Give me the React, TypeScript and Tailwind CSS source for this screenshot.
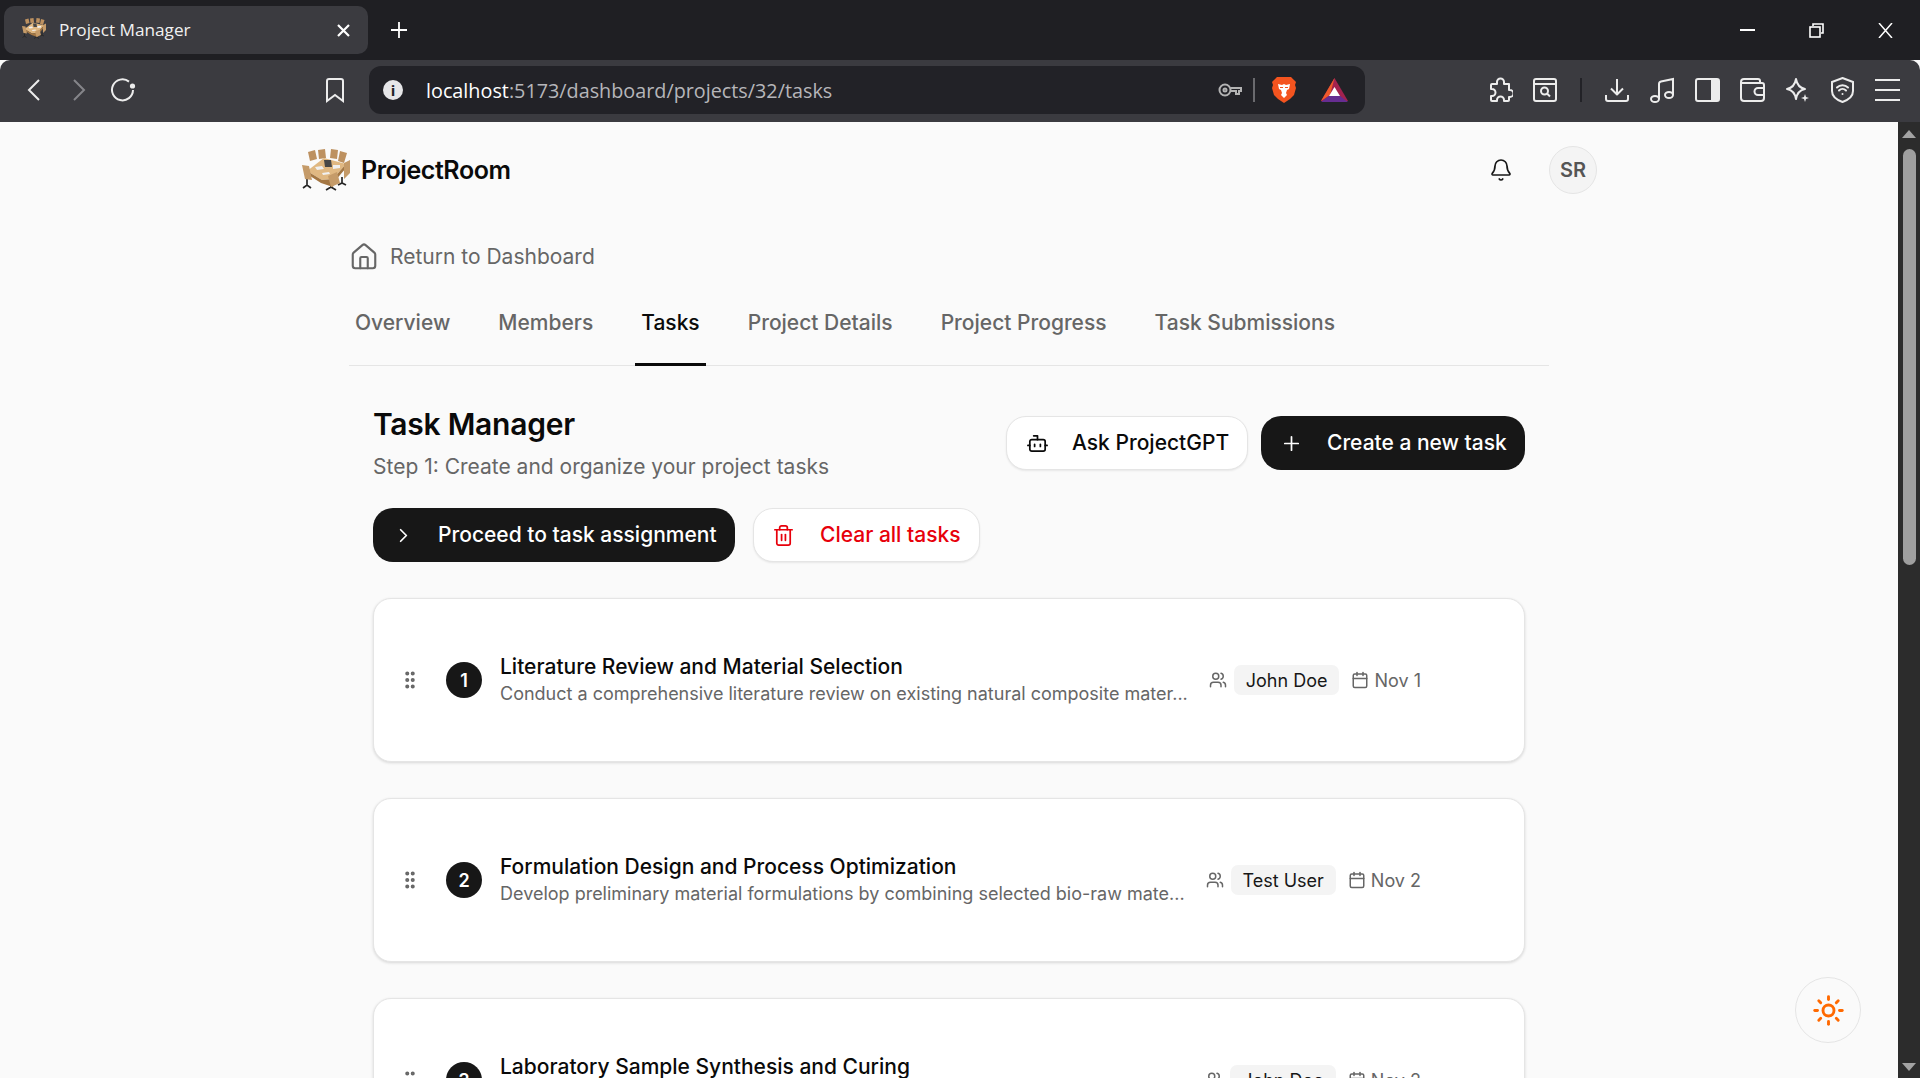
import { Bell, Bot, Calendar, ChevronRight, GripVertical, House, Plus, Sun, Trash2, Users } from "lucide-react";

const tasks = [
	{ n: 1, title: "Literature Review and Material Selection", desc: "Conduct a comprehensive literature review on existing natural composite mater...", who: "John Doe", date: "Nov 1" },
	{ n: 2, title: "Formulation Design and Process Optimization", desc: "Develop preliminary material formulations by combining selected bio-raw mate...", who: "Test User", date: "Nov 2" },
	{ n: 3, title: "Laboratory Sample Synthesis and Curing", desc: "Prepare laboratory samples based on the optimized formulations...", who: "John Doe", date: "Nov 2" },
];

const tabs = ["Overview", "Members", "Tasks", "Project Details", "Project Progress", "Task Submissions"];

// drawn stand-in for the conference table picture
const RoomLogo = ({ className }: { className: string }) => (
	<svg viewBox="0 0 48 42" className={className}>
		<path d="M5 30v7M1 39l4-3 4 3M40 28v7M36 36l4-2 4 2M29 34v4M24 41l5-3 5 3" stroke="#262626" strokeWidth="1.7" fill="none" />
		<path d="M6 3l7-2 2 9-7 2zM16 1l7-1 1 9-7 1zM29 0l7 1-1 9-7-1zM38 2l7 2-3 10-6-2z" fill="#bd9160" />
		<path d="M5 22L22 9l22 6-13 15-11 1z" fill="#e0b882" />
		<path d="M5 22l15 9 11-1 13-15v4L32 33l-1 5-12-4-14-9z" fill="#a47743" />
		<path d="M0 16l7 1 3 14-7-1zM42 14l6-3v13l-6 6zM26 27l9-4 3 11-9 4z" fill="#c59b69" />
		<path d="M22 11l7 0 1 7-7 0z" fill="#474747" />
		<path d="M13 18l7-1 2 3-7 1zM31 16l7 0 0 3-7 1zM20 24l7-1 1 2-7 1z" fill="#f0f0f0" />
	</svg>
);

const BraveLion = () => (
	<svg viewBox="0 0 24 26" className="w-[24px] h-[26px]">
		<path d="M5 0h14l3 3 2 2-1 3 1 3-2 7-4 4-6 4-6-4-4-4-2-7 1-3-1-3 2-2z" fill="#f4541f" />
		<path d="M6 7l4 1 2-1 2 1 4-1-1 5-2 1-1 3 1 2-3 3-3-3 1-2-1-3-2-1z" fill="#fff" />
		<path d="M8 10h3v1H8zM13 10h3v1h-3z" fill="#f4541f" />
	</svg>
);

const BatTriangle = () => (
	<svg viewBox="0 0 27 24" className="w-[27px] h-[24px]">
		<path d="M13.5 0L0 23h27z" fill="#a3224f" />
		<path d="M13.5 0L0 23l9-6z" fill="#ef5a2b" />
		<path d="M0 24l9-7h9l9 7z" fill="#662d91" />
		<path d="M13.5 9L8 18h11z" fill="#fff" />
	</svg>
);

const TaskCard = ({ n, title, desc, who, date }: (typeof tasks)[number]) => (
	<div className="h-[164px] shrink-0 rounded-[18px] border border-[#e5e5e5] bg-white shadow-[0_1px_3px_rgba(0,0,0,0.14)] flex items-center pl-[25px] pr-[103px]">
		<GripVertical className="w-[22px] h-[22px] text-[#666] mr-[25px] shrink-0" strokeWidth={2.4} />
		<div className="w-[36px] h-[36px] rounded-full bg-[#171717] text-white text-[18px] font-semibold flex items-center justify-center mr-[18px] shrink-0">{n}</div>
		<div className="flex-1 min-w-0">
			<div className="text-[21px] leading-[28px] font-medium text-[#0a0a0a] whitespace-nowrap">{title}</div>
			<div className="text-[18px] leading-[26px] text-[#666] whitespace-nowrap">{desc}</div>
		</div>
		<div className="flex items-center ml-[16px] shrink-0">
			<Users className="w-[18px] h-[18px] text-[#666] mr-[7px]" />
			<span className="h-[30px] px-[12px] rounded-[7px] bg-[#f4f4f4] text-[#171717] text-[18px] flex items-center">{who}</span>
			<Calendar className="w-[18px] h-[18px] text-[#666] ml-[12px] mr-[5px]" />
			<span className="text-[18px] text-[#666]">{date}</span>
		</div>
	</div>
);

const App = () => {
	return (
		<div className="w-[1920px] h-[1078px] flex flex-col overflow-hidden relative bg-[#fafafa] font-['Inter',sans-serif]">
			{/* browser tab strip */}
			<div className="h-[60px] shrink-0 bg-[#1f1f23] flex items-center pl-[4px] pr-[27px] text-white font-['Open_Sans',sans-serif]">
				<div className="w-[364px] h-[48px] rounded-[10px] bg-[#3b3b40] flex items-center pl-[18px] pr-[18px]">
					<RoomLogo className="w-[24px] h-[21px] mr-[13px] -mt-[3px]" />
					<span className="text-[17.2px] flex-1 text-[#f1f1f1] -mt-[1px]">Project Manager</span>
					<svg viewBox="0 0 13 13" className="w-[13px] h-[13px]" stroke="currentColor" strokeWidth="2.2"><path d="M1 1l11 11M12 1L1 12" /></svg>
				</div>
				<svg viewBox="0 0 16 16" className="w-[16px] h-[16px] ml-[23px]" stroke="currentColor" strokeWidth="1.8"><path d="M8 0v16M0 8h16" /></svg>
				<div className="flex-1" />
				<div className="w-[15px] h-[2px] bg-white" />
				<svg viewBox="0 0 15 15" className="w-[15px] h-[15px] ml-[54px]" fill="none" stroke="currentColor" strokeWidth="1.6"><path d="M4 3V1h10v9h-2" /><rect x="1" y="4" width="10" height="10" /></svg>
				<svg viewBox="0 0 15 15" className="w-[15px] h-[15px] ml-[54px]" stroke="currentColor" strokeWidth="1.5"><path d="M1 0l13 15M14 0L1 15" /></svg>
			</div>

			{/* browser toolbar */}
			<div className="h-[62px] shrink-0 bg-[#3b3b40] rounded-t-[10px] flex items-center text-[#ececec] pl-[27px] pb-[2px]">
				<svg viewBox="0 0 14 22" className="w-[14px] h-[22px]" fill="none" stroke="currentColor" strokeWidth="2"><path d="M12 1L2 11l10 10" /></svg>
				<svg viewBox="0 0 14 22" className="w-[14px] h-[22px] ml-[31px] text-[#85858a]" fill="none" stroke="currentColor" strokeWidth="2"><path d="M2 1l10 10L2 21" /></svg>
				<svg viewBox="0 0 26 24" className="w-[26px] h-[24px] ml-[24px]" fill="none" stroke="currentColor" strokeWidth="2">
					<path d="M19 3.6A10.5 10.5 0 1 0 23 12" />
					<circle cx="22.5" cy="8" r="2.6" fill="currentColor" stroke="none" />
				</svg>
				<svg viewBox="0 0 18 25" className="w-[18px] h-[25px] ml-[190px]" fill="none" stroke="currentColor" strokeWidth="2"><path d="M3 1h12a2 2 0 0 1 2 2v20l-8-6-8 6V3a2 2 0 0 1 2-2z" /></svg>
				<div className="w-[996px] h-[48px] ml-[25px] rounded-[12px] bg-[#222227] flex items-center pl-[14px] font-['Open_Sans',sans-serif]">
					<span className="w-[20px] h-[20px] rounded-full bg-[#e6e6e8] text-[#222227] text-[15px] font-bold flex items-center justify-center">i</span>
					<span className="ml-[23px] text-[19.8px] flex-1 pt-[1px]">
						<span className="text-white">localhost</span>
						<span className="text-[#b6b6ba]">:5173/dashboard/projects/32/tasks</span>
					</span>
					<svg viewBox="0 0 24 14" className="w-[24px] h-[14px] text-[#b3b3b3]" fill="none" stroke="currentColor" strokeWidth="2">
						<circle cx="7" cy="7" r="5.5" />
						<circle cx="7" cy="7" r="1.5" />
						<path d="M12.5 5H23v3h-2v3h-3V8h-5.500" />
					</svg>
					<div className="w-[2px] h-[24px] bg-[#6a6a6e] ml-[11px]" />
					<div className="ml-[17px]"><BraveLion /></div>
					<div className="ml-[25px] mr-[17px]"><BatTriangle /></div>
				</div>
				<svg viewBox="0 0 26 26" className="w-[26px] h-[26px] ml-[122px]" fill="none" stroke="currentColor" strokeWidth="2" strokeLinejoin="round">
					<path d="M10 7V5a3.500 3.500 0 0 1 7 0v2h5v6h1a3.500 3.500 0 0 1 0 7h-1v3a1 1 0 0 1-1 1h-4v-1a3.500 3.500 0 0 0-7 0v1H5a1 1 0 0 1-1-1v-4h1a3.500 3.500 0 0 0 0-7H4V8a1 1 0 0 1 1-1z" />
				</svg>
				<svg viewBox="0 0 24 24" className="w-[24px] h-[24px] ml-[20px]" fill="none" stroke="currentColor" strokeWidth="2">
					<rect x="1" y="1" width="22" height="22" rx="2" />
					<path d="M1 6h22" />
					<circle cx="11.500" cy="13" r="3.500" />
					<path d="M14 15.500l3 3" />
				</svg>
				<div className="w-[2px] h-[24px] bg-[#222227] ml-[23px]" />
				<svg viewBox="0 0 24 24" className="w-[24px] h-[24px] ml-[23px]" fill="none" stroke="currentColor" strokeWidth="2" strokeLinejoin="round">
					<path d="M12 1v15M6 10.500l6 6 6-6M1 17v4a2 2 0 0 0 2 2h18a2 2 0 0 0 2-2v-4" />
				</svg>
				<svg viewBox="0 0 26 26" className="w-[26px] h-[26px] ml-[20px]" fill="none" stroke="currentColor" strokeWidth="2">
					<ellipse cx="6" cy="22" rx="4" ry="3" />
					<ellipse cx="20" cy="18" rx="4" ry="3" />
					<path d="M10 22V7q0-2 2-2.500L24 2v16" />
				</svg>
				<div className="w-[25px] h-[24px] ml-[20px] rounded-[3px] border-2 border-[#ececec] flex justify-end">
					<div className="w-[7px] h-full bg-[#ececec]" />
				</div>
				<svg viewBox="0 0 25 24" className="w-[25px] h-[24px] ml-[20px]" fill="none" stroke="currentColor" strokeWidth="2">
					<path d="M20 5V3a2 2 0 0 0-2-2H4a3 3 0 0 0-3 3v16a3 3 0 0 0 3 3h17a3 3 0 0 0 3-3V7a2 2 0 0 0-2-2H1" />
					<path d="M24 10h-6a2.500 2.500 0 0 0 0 7h6" />
				</svg>
				<svg viewBox="0 0 25 26" className="w-[25px] h-[26px] ml-[20px]" fill="none" stroke="currentColor" strokeWidth="2" strokeLinejoin="round">
					<path d="M11 2c1 6 4 9 9 10-5 1-8 4-9 10-1-6-4-9-9-10 5-1 8-4 9-10z" />
					<path d="M20 17l1 3 3 1-3 1-1 3-1-3-3-1 3-1z" fill="currentColor" stroke="none" />
				</svg>
				<svg viewBox="0 0 23 26" className="w-[23px] h-[26px] ml-[21px]" fill="none" stroke="currentColor" strokeWidth="2" strokeLinecap="round">
					<path d="M11.500 1L22 5v9c0 5-5 9-10.500 11C6 23 1 19 1 14V5z" />
					<path d="M6 10.500c3-3 8-3 11 0M8 13.500c2-2 5-2 7 0" />
					<circle cx="11.500" cy="17" r="1" fill="currentColor" stroke="none" />
				</svg>
				<div className="w-[25px] ml-[21px] flex flex-col gap-[8px]">
					<div className="h-[2px] bg-[#ececec]" />
					<div className="h-[2px] bg-[#ececec]" />
					<div className="h-[2px] bg-[#ececec]" />
				</div>
			</div>

			<div className="flex-1 min-h-0 flex">
				<div className="flex-1 min-w-0 overflow-hidden">
					<div className="w-[1297px] ml-[300px]">
						{/* top bar */}
						<div className="h-[48px] mt-[24px] flex items-center">
							<RoomLogo className="w-[48px] h-[42px] ml-[2px]" />
							<span className="ml-[11px] pt-[1px] text-[25px] font-semibold tracking-[-0.45px] text-[#0a0a0a]">ProjectRoom</span>
							<div className="flex-1" />
							<Bell className="w-[24px] h-[24px] text-[#171717] mr-[36px]" strokeWidth={1.7} />
							<div className="w-[48px] h-[48px] rounded-full bg-[#f4f4f4] border border-[#e5e5e5] text-[#555] text-[20px] font-semibold flex items-center justify-center">SR</div>
						</div>

						<div className="ml-[49px] w-[1200px]">
							<div className="flex items-center h-[28px] mt-[49px] text-[#666]">
								<House className="w-[30px] h-[30px]" strokeWidth={1.7} />
								<span className="ml-[11px] text-[21px]">Return to Dashboard</span>
							</div>

							{/* tabs */}
							<div className="flex gap-[36px] border-b border-[#e5e5e5] h-[72px] mt-[23px]">
								{tabs.map((t) => (
									<div key={t} className={`text-[21px] font-medium px-[6px] pt-[13px] -mb-[1px] ${t === "Tasks" ? "text-[#0a0a0a] border-b-[3px] border-[#0a0a0a]" : "text-[#666]"}`}>
										{t}
									</div>
								))}
							</div>

							<div className="pl-[24px] pr-[24px]">
								<div className="flex justify-between mt-[40px]">
									<div>
										<h1 className="text-[30px] leading-[36px] font-semibold text-[#0a0a0a] tracking-[-0.25px]">Task Manager</h1>
										<p className="text-[21px] leading-[28px] text-[#666] mt-[11px]">Step 1: Create and organize your project tasks</p>
									</div>
									<div className="flex gap-[13px] mt-[10px] h-[54px]">
										<button className="w-[242px] rounded-[20px] border border-[#e5e5e5] bg-white shadow-[0_1px_2px_rgba(0,0,0,0.08)] flex items-center pl-[19px] text-[21px] font-medium text-[#0a0a0a]">
											<Bot className="w-[23px] h-[23px] mr-[23px]" strokeWidth={1.8} />
											Ask ProjectGPT
										</button>
										<button className="w-[264px] rounded-[20px] bg-[#171717] flex items-center pl-[19px] text-[21px] font-medium text-white">
											<Plus className="w-[23px] h-[23px] mr-[24px]" strokeWidth={1.8} />
											Create a new task
										</button>
									</div>
								</div>

								<div className="flex gap-[18px] mt-[27px] h-[54px]">
									<button className="w-[362px] rounded-[20px] bg-[#171717] flex items-center pl-[19px] text-[21px] font-medium text-white">
										<ChevronRight className="w-[23px] h-[23px] mr-[23px]" strokeWidth={1.8} />
										Proceed to task assignment
									</button>
									<button className="w-[227px] rounded-[20px] border border-[#e5e5e5] bg-white shadow-[0_1px_2px_rgba(0,0,0,0.08)] flex items-center pl-[18px] text-[21px] font-medium text-[#e7000b]">
										<Trash2 className="w-[23px] h-[23px] mr-[25px]" strokeWidth={1.8} />
										Clear all tasks
									</button>
								</div>

								<div className="flex flex-col gap-[36px] mt-[36px]">
									{tasks.map((t) => (
										<TaskCard key={t.n} {...t} />
									))}
								</div>
							</div>
						</div>
					</div>
				</div>

				{/* page scrollbar */}
				<div className="w-[22px] shrink-0 bg-[#2c2c2c] flex flex-col items-center pt-[8px] pb-[7px]">
					<div className="w-0 h-0 border-x-[7px] border-x-transparent border-b-[8px] border-b-[#a3a3a3]" />
					<div className="w-[13px] h-[416px] mt-[11px] rounded-full bg-[#9f9f9f]" />
					<div className="flex-1" />
					<div className="w-0 h-0 border-x-[7px] border-x-transparent border-t-[8px] border-t-[#a3a3a3]" />
				</div>
			</div>

			{/* theme toggle */}
			<button className="absolute left-[1795px] top-[977px] w-[66px] h-[66px] rounded-full border border-[#e5e5e5] bg-[#fafafa] flex items-center justify-center">
				<Sun className="w-[33px] h-[33px] text-[#ff6900]" strokeWidth={2.1} />
			</button>
		</div>
	);
};

export default App;
